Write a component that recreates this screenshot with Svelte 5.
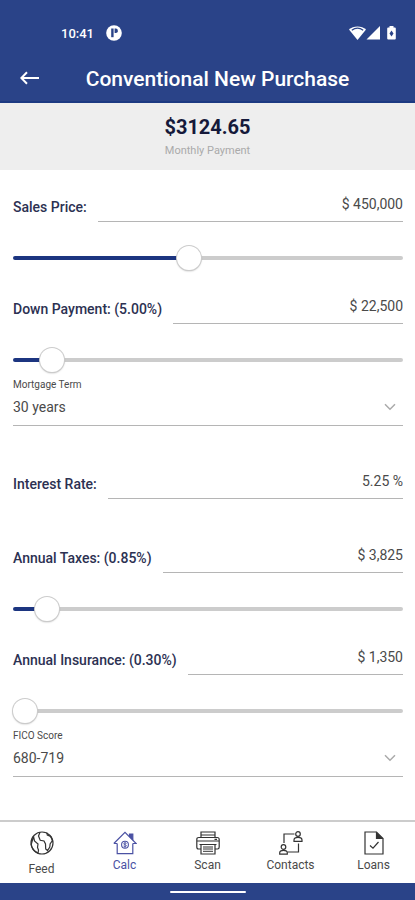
<script lang="ts">
  let monthlyPayment = $state('3124.65');
  let term = $state('30 years');
  let fico = $state('680-719');
  let rate = $state('5.25 %');
  let activeTab = $state('Calc');

  let price = $state({ id: 'price', label: 'Sales Price:', value: 450000, min: 5000, max: 1000000 });
  let down = $state({ id: 'down', label: 'Down Payment: (5.00%)', value: 22500, min: 0, max: 300000 });
  let taxes = $state({ id: 'taxes', label: 'Annual Taxes: (0.85%)', value: 3825, min: 0, max: 65000 });
  let insurance = $state({ id: 'insurance', label: 'Annual Insurance: (0.30%)', value: 1350, min: 1350, max: 20000 });

  const terms = ['30 years', '20 years', '15 years', '10 years'];
  const scores = ['760+', '720-759', '680-719', '640-679', '620-639'];
  const tabs = ['Feed', 'Calc', 'Scan', 'Contacts', 'Loans'];

  function money(n: number) {
    return '$ ' + n.toLocaleString('en-US');
  }

  function setAmount(field: { value: number }, event: Event) {
    const digits = (event.target as HTMLInputElement).value.replace(/\D/g, '');
    field.value = Number(digits);
  }

  function percent(field: { value: number; min: number; max: number }) {
    return ((field.value - field.min) / (field.max - field.min)) * 100;
  }
</script>

{#snippet amount(field)}
  <div class="row">
    <label for={field.id}>{field.label}</label>
    <input
      class="value"
      id={field.id}
      type="text"
      inputmode="numeric"
      value={money(field.value)}
      onchange={(e) => setAmount(field, e)}
    />
  </div>
  <input
    class="slider"
    type="range"
    aria-label={field.label}
    min={field.min}
    max={field.max}
    bind:value={field.value}
    style="--fill: {percent(field)}%"
  />
{/snippet}

{#snippet chevron()}
  <svg class="chevron" viewBox="0 0 12 8" aria-hidden="true">
    <path d="M1 1.2l5 5 5-5" />
  </svg>
{/snippet}

<div class="app">
  <header>
    <div class="status">
      <span>10:41</span>
      <svg class="badge" viewBox="0 0 16 16" aria-hidden="true">
        <circle cx="8" cy="8" r="7.8" fill="#fff" />
        <path d="M5.2 3.5h2.4v8.7H5.2z" fill="#2a4388" />
        <path d="M8.6 3.5h1.2q2 0 2 2v.8q0 1.700-2 1.700H8.600z" fill="#2a4388" />
      </svg>
      <span class="spacer"></span>
      <svg class="signals" viewBox="0 0 48 16" aria-hidden="true">
        <path d="M0 4.600C4.400.3 12.600.3 17 4.600L8.500 15z" fill="#fff" />
        <path d="M2.800 5.200c3.400-2.400 8-2.400 11.400 0" fill="none" stroke="#2a4388" stroke-width="1.3" />
        <path d="M31 1v13.500H17.500z" fill="#fff" />
        <path d="M40.500 1h4v1.500h1.300q1 0 1 1v10q0 1-1 1h-6.600q-1 0-1-1v-10q0-1 1-1h1.300z" fill="#fff" />
        <path d="M42.500 5.500l2 3-2 3-2-3z" fill="#2a4388" />
      </svg>
    </div>
    <div class="title">
      <button class="back" aria-label="Back">
        <svg viewBox="0 0 20 14" aria-hidden="true">
          <path d="M19 7H1.500M7 1.300L1.300 7 7 12.700" />
        </svg>
      </button>
      <h1>Conventional New Purchase</h1>
    </div>
  </header>

  <section class="summary">
    <strong>${monthlyPayment}</strong>
    <span>Monthly Payment</span>
  </section>

  <main>
    {@render amount(price)}
    {@render amount(down)}

    <div class="picker term">
      <label for="term">Mortgage Term</label>
      <div class="select">
        <select id="term" bind:value={term}>
          {#each terms as t}<option>{t}</option>{/each}
        </select>
        {@render chevron()}
      </div>
    </div>

    <div class="row rate">
      <label for="rate">Interest Rate:</label>
      <input class="value" id="rate" type="text" bind:value={rate} />
    </div>

    {@render amount(taxes)}
    {@render amount(insurance)}

    <div class="picker">
      <label for="fico">FICO Score</label>
      <div class="select">
        <select id="fico" bind:value={fico}>
          {#each scores as s}<option>{s}</option>{/each}
        </select>
        {@render chevron()}
      </div>
    </div>
  </main>

  <nav>
    {#each tabs as tab}
      <button class="tab" class:active={activeTab === tab} class:feed={tab === 'Feed'} onclick={() => (activeTab = tab)}>
        <svg viewBox="0 0 24 24" aria-hidden="true">
          {#if tab === 'Feed'}
            <circle cx="12" cy="12" r="11" />
            <path d="M3.500 5.500l1 4.500 3.500 3-.5 3.500 1 2.500-.5 3.300C4.500 20.500 1.800 17 1.200 13.500z" />
            <path d="M10 1.300L8.500 5l1.700 4.300 3.800.7 1.500 3 .2 5 1.800 1.500 2.300-3.500.3-3 2.300-3.500-1.700-4-3.400-1.500-.5-2.300" />
          {:else if tab === 'Calc'}
            <path d="M.8 12.500L12 1.300l11.200 11.200h-3.400M.8 12.500h3.400M4.200 12.500v10.200h15.600V12.500" />
            <path d="M16.500 5.300V3h3.300v5.500z" fill="currentColor" />
            <circle cx="12" cy="13.700" r="3.400" stroke-width="1.100" />
            <path d="M13.500 12.500c-1.200-1-3-.5-2.800.5s2.600.6 2.700 1.600-1.800 1.300-2.900.4M12 11v5.600" stroke-width=".9" />
          {:else if tab === 'Scan'}
            <path d="M5 6.500V1h14v5.500M5 4h14" />
            <path d="M5 18H2.500Q.8 18 .8 16V8.500q0-2 2-2h18.400q2 0 2 2V16q0 2-1.700 2H19" />
            <path d="M1 10h22M18.500 8.300h2.500M3.500 13.500h17M5 13.500V23h14v-9.500" />
            <path d="M7 16h10M7 18h10M7 20.300h10" stroke-width="1" />
          {:else if tab === 'Contacts'}
            <path d="M15.500 3H5v9M8.500 21h11v-8.500" />
            <circle cx="19" cy="3" r="2.300" />
            <path d="M15 10.300V9q0-2.700 4-2.700T23 9v1.300z" />
            <circle cx="4.500" cy="16" r="2.300" />
            <path d="M.7 23.200v-1.400q0-2.500 3.800-2.500t3.800 2.500v1.400z" />
          {:else}
            <path d="M3 1h11.500L21 7.500V23H3z" />
            <path d="M14.500 2v5.500H20z" fill="currentColor" />
            <path d="M8 14.500l3 2.700 5.500-6.200" />
          {/if}
        </svg>
        <span>{tab}</span>
      </button>
    {/each}
  </nav>

  <footer><span></span></footer>
</div>

<style>
  :global(body) {
    margin: 0;
    background: #fff;
  }

  .app {
    display: flex;
    flex-direction: column;
    min-height: 100vh;
    font-family: Roboto, 'Liberation Sans', sans-serif;
    color: #4a4a4a;
  }

  button,
  input,
  select {
    font: inherit;
    color: inherit;
    margin: 0;
    padding: 0;
    border: none;
    border-radius: 0;
    background: none;
    box-sizing: border-box;
  }

  header {
    background: #2a4388;
    border-bottom: 2px solid #1c3a82;
    color: #fff;
  }

  .status {
    display: flex;
    align-items: center;
    gap: 12px;
    padding: 24px 18px 0 61px;
    height: 18px;
    font-size: 13px;
    font-weight: 500;
  }

  .badge {
    width: 16px;
    height: 16px;
  }

  .spacer {
    flex: 1;
  }

  .signals {
    width: 48px;
    height: 16px;
  }

  .title {
    display: flex;
    align-items: center;
    padding: 0 20px;
    height: 59px;
  }

  .title h1 {
    flex: 1;
    margin: 0;
    padding-top: 15px;
    text-align: center;
    font-size: 21px;
    font-weight: 500;
    line-height: 28px;
  }

  .back {
    display: flex;
    padding-top: 13px;
    cursor: pointer;
  }

  .back svg {
    width: 20px;
    height: 14px;
    fill: none;
    stroke: #fff;
    stroke-width: 2;
  }

  .summary {
    display: flex;
    flex-direction: column;
    align-items: center;
    padding: 10px 0 11px;
    background: #eee;
  }

  .summary strong {
    font-size: 20px;
    line-height: 28px;
    font-weight: 700;
    color: #15193a;
  }

  .summary span {
    padding-top: 2px;
    font-size: 11px;
    line-height: 16px;
    color: #aaa;
  }

  main {
    flex: 1;
    padding: 4px 12px 24px 13px;
  }

  .row {
    display: flex;
    gap: 11px;
    height: 48px;
  }

  .row label {
    padding-top: 24px;
    font-size: 14px;
    line-height: 18px;
    font-weight: 500;
    color: #2c3152;
  }

  .value {
    flex: 1;
    min-width: 0;
    padding-top: 12px;
    border-bottom: 1px solid #b5b5b5;
    text-align: right;
    font-size: 14px;
    outline: none;
  }

  .rate {
    margin-bottom: 26px;
  }

  .slider {
    display: block;
    appearance: none;
    width: 100%;
    height: 26px;
    margin: 23px 0 5px;
    cursor: pointer;
  }

  .slider::-webkit-slider-runnable-track {
    height: 4px;
    border-radius: 2px;
    background: linear-gradient(to right, #1c3580 var(--fill), #ccc var(--fill));
  }

  .slider::-webkit-slider-thumb {
    appearance: none;
    width: 24px;
    height: 24px;
    margin-top: -10px;
    border-radius: 50%;
    background: #fff;
    box-shadow: 0 0 0 1px #ccc, 0 1px 2px rgba(0, 0, 0, 0.35);
  }

  .picker label {
    display: block;
    font-size: 10px;
    line-height: 14px;
  }

  .term {
    margin-bottom: 25px;
  }

  .select {
    display: flex;
    align-items: center;
    position: relative;
    height: 33px;
    border-bottom: 1px solid #b5b5b5;
  }

  .select select {
    appearance: none;
    width: 100%;
    height: 32px;
    padding-bottom: 4px;
    font-size: 14px;
    outline: none;
  }

  .chevron {
    position: absolute;
    right: 7px;
    top: 11px;
    width: 12px;
    height: 8px;
    fill: none;
    stroke: #aaa;
    stroke-width: 1.5;
    pointer-events: none;
  }

  nav {
    display: grid;
    grid-template-columns: repeat(5, 1fr);
    height: 61px;
    border-top: 2px solid #ccc;
  }

  .tab {
    display: flex;
    flex-direction: column;
    align-items: center;
    gap: 2px;
    padding-top: 9px;
    font-size: 12px;
    line-height: 16px;
    cursor: pointer;
  }

  .tab.feed {
    gap: 6px;
  }

  .tab svg {
    width: 24px;
    height: 24px;
    fill: none;
    stroke: #333;
    color: #333;
    stroke-width: 1.2;
  }

  .tab.active {
    color: #4a51a3;
  }

  .tab.active svg {
    color: #4a51a3;
    stroke: #4a51a3;
  }

  footer {
    display: flex;
    justify-content: center;
    padding: 8px 0 7px;
    background: #2a4388;
  }

  footer span {
    width: 76px;
    height: 2px;
    border-radius: 1px;
    background: #fff;
  }
</style>
